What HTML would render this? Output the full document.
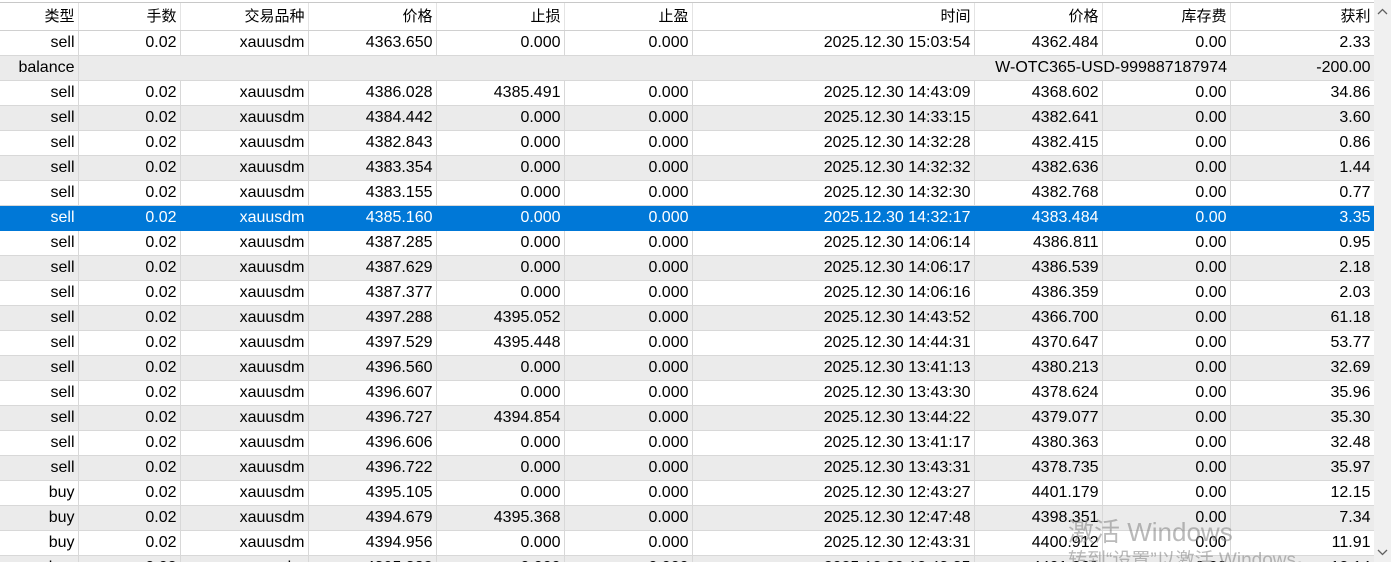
<!DOCTYPE html>
<html style="overflow:hidden;height:562px"><head><meta charset="utf-8"><style>
body{margin:0;width:1391px;height:562px;overflow:hidden;background:#fff;font-family:"Liberation Sans","Noto Sans CJK SC",sans-serif;font-size:16px;color:#000;position:relative}
table{position:absolute;left:0;top:3px;border-collapse:collapse;table-layout:fixed;width:1374px}
td,th{height:24px;padding:0 3px 0 0;text-align:right;border-right:1px solid #d8d8d8;border-bottom:1px solid #d8d8d8;white-space:nowrap;overflow:hidden;font-weight:normal;line-height:24px}
th{height:27px;line-height:27px;border-right:1px solid #e4e4e4;border-bottom:1px solid #d0d0d0;background:#fff;font-size:15px}
tr.g td{background:#ebebeb}
tr.s td{background:#0078d7;color:#fff;border-color:#0078d7}
.top{position:absolute;left:0;top:2px;width:1374px;height:1px;background:#c8c8c8}
.sb{position:absolute;left:1374px;top:0;width:17px;height:562px;background:#f0f0f0}
.th{position:absolute;left:1376px;top:25px;width:13px;height:111px;background:#cdcdcd}
.wm1{position:absolute;left:1068px;top:512px;font-size:26px;color:rgba(130,130,130,.55)}
.wm2{position:absolute;left:1068px;top:545px;font-size:19px;color:rgba(130,130,130,.55)}
</style></head><body>
<div class="top"></div>
<table>
<colgroup><col style="width:78px"><col style="width:102px"><col style="width:128px"><col style="width:128px"><col style="width:128px"><col style="width:128px"><col style="width:282px"><col style="width:128px"><col style="width:128px"><col style="width:144px"></colgroup>
<tr><th>类型</th><th>手数</th><th>交易品种</th><th>价格</th><th>止损</th><th>止盈</th><th>时间</th><th>价格</th><th>库存费</th><th>获利</th></tr>
<tr><td>sell</td><td>0.02</td><td>xauusdm</td><td>4363.650</td><td>0.000</td><td>0.000</td><td>2025.12.30 15:03:54</td><td>4362.484</td><td>0.00</td><td>2.33</td></tr>
<tr class="g"><td>balance</td><td colspan="8" style="border-right:none">W-OTC365-USD-999887187974</td><td>-200.00</td></tr>
<tr><td>sell</td><td>0.02</td><td>xauusdm</td><td>4386.028</td><td>4385.491</td><td>0.000</td><td>2025.12.30 14:43:09</td><td>4368.602</td><td>0.00</td><td>34.86</td></tr>
<tr class="g"><td>sell</td><td>0.02</td><td>xauusdm</td><td>4384.442</td><td>0.000</td><td>0.000</td><td>2025.12.30 14:33:15</td><td>4382.641</td><td>0.00</td><td>3.60</td></tr>
<tr><td>sell</td><td>0.02</td><td>xauusdm</td><td>4382.843</td><td>0.000</td><td>0.000</td><td>2025.12.30 14:32:28</td><td>4382.415</td><td>0.00</td><td>0.86</td></tr>
<tr class="g"><td>sell</td><td>0.02</td><td>xauusdm</td><td>4383.354</td><td>0.000</td><td>0.000</td><td>2025.12.30 14:32:32</td><td>4382.636</td><td>0.00</td><td>1.44</td></tr>
<tr><td>sell</td><td>0.02</td><td>xauusdm</td><td>4383.155</td><td>0.000</td><td>0.000</td><td>2025.12.30 14:32:30</td><td>4382.768</td><td>0.00</td><td>0.77</td></tr>
<tr class="s"><td>sell</td><td>0.02</td><td>xauusdm</td><td>4385.160</td><td>0.000</td><td>0.000</td><td>2025.12.30 14:32:17</td><td>4383.484</td><td>0.00</td><td>3.35</td></tr>
<tr><td>sell</td><td>0.02</td><td>xauusdm</td><td>4387.285</td><td>0.000</td><td>0.000</td><td>2025.12.30 14:06:14</td><td>4386.811</td><td>0.00</td><td>0.95</td></tr>
<tr class="g"><td>sell</td><td>0.02</td><td>xauusdm</td><td>4387.629</td><td>0.000</td><td>0.000</td><td>2025.12.30 14:06:17</td><td>4386.539</td><td>0.00</td><td>2.18</td></tr>
<tr><td>sell</td><td>0.02</td><td>xauusdm</td><td>4387.377</td><td>0.000</td><td>0.000</td><td>2025.12.30 14:06:16</td><td>4386.359</td><td>0.00</td><td>2.03</td></tr>
<tr class="g"><td>sell</td><td>0.02</td><td>xauusdm</td><td>4397.288</td><td>4395.052</td><td>0.000</td><td>2025.12.30 14:43:52</td><td>4366.700</td><td>0.00</td><td>61.18</td></tr>
<tr><td>sell</td><td>0.02</td><td>xauusdm</td><td>4397.529</td><td>4395.448</td><td>0.000</td><td>2025.12.30 14:44:31</td><td>4370.647</td><td>0.00</td><td>53.77</td></tr>
<tr class="g"><td>sell</td><td>0.02</td><td>xauusdm</td><td>4396.560</td><td>0.000</td><td>0.000</td><td>2025.12.30 13:41:13</td><td>4380.213</td><td>0.00</td><td>32.69</td></tr>
<tr><td>sell</td><td>0.02</td><td>xauusdm</td><td>4396.607</td><td>0.000</td><td>0.000</td><td>2025.12.30 13:43:30</td><td>4378.624</td><td>0.00</td><td>35.96</td></tr>
<tr class="g"><td>sell</td><td>0.02</td><td>xauusdm</td><td>4396.727</td><td>4394.854</td><td>0.000</td><td>2025.12.30 13:44:22</td><td>4379.077</td><td>0.00</td><td>35.30</td></tr>
<tr><td>sell</td><td>0.02</td><td>xauusdm</td><td>4396.606</td><td>0.000</td><td>0.000</td><td>2025.12.30 13:41:17</td><td>4380.363</td><td>0.00</td><td>32.48</td></tr>
<tr class="g"><td>sell</td><td>0.02</td><td>xauusdm</td><td>4396.722</td><td>0.000</td><td>0.000</td><td>2025.12.30 13:43:31</td><td>4378.735</td><td>0.00</td><td>35.97</td></tr>
<tr><td>buy</td><td>0.02</td><td>xauusdm</td><td>4395.105</td><td>0.000</td><td>0.000</td><td>2025.12.30 12:43:27</td><td>4401.179</td><td>0.00</td><td>12.15</td></tr>
<tr class="g"><td>buy</td><td>0.02</td><td>xauusdm</td><td>4394.679</td><td>4395.368</td><td>0.000</td><td>2025.12.30 12:47:48</td><td>4398.351</td><td>0.00</td><td>7.34</td></tr>
<tr><td>buy</td><td>0.02</td><td>xauusdm</td><td>4394.956</td><td>0.000</td><td>0.000</td><td>2025.12.30 12:43:31</td><td>4400.912</td><td>0.00</td><td>11.91</td></tr>
<tr class="g"><td>buy</td><td>0.02</td><td>xauusdm</td><td>4395.382</td><td>0.000</td><td>0.000</td><td>2025.12.30 12:43:35</td><td>4401.269</td><td>0.00</td><td>12.14</td></tr>
</table>
<div class="sb"><div class="th"></div>
<svg style="position:absolute;left:3px;top:8px" width="11" height="7"><path d="M1 6L5.5 1.5L10 6" stroke="#606060" fill="none" stroke-width="1.3"/></svg>
<svg style="position:absolute;left:3px;top:549px" width="11" height="7"><path d="M1 1L5.5 5.5L10 1" stroke="#606060" fill="none" stroke-width="1.3"/></svg>
</div>
<div class="wm1">激活 Windows</div>
<div class="wm2">转到“设置”以激活 Windows。</div>
</body></html>
